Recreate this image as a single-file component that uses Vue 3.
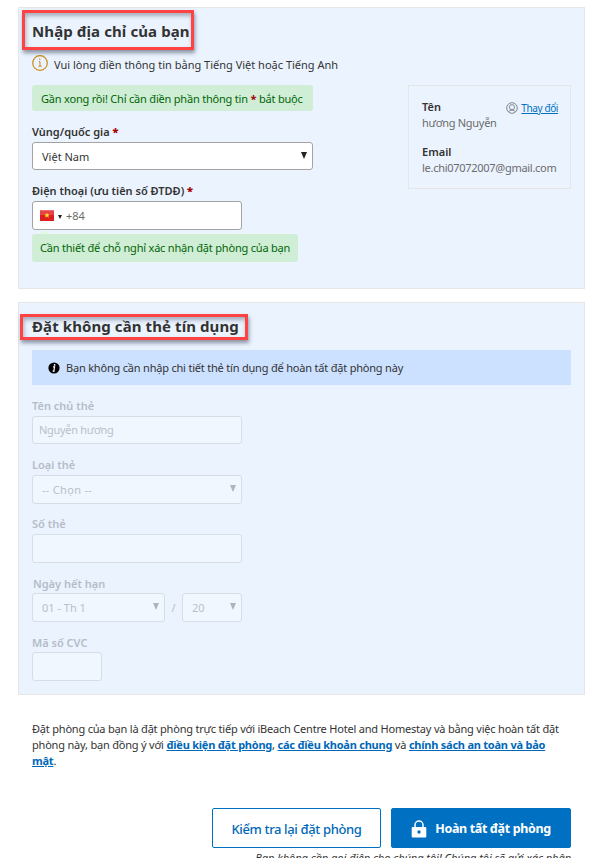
<script setup>
import { ref } from 'vue'

const country = ref('Việt Nam')
const holder = ref('Nguyễn hương')
const email = ref('le.chi07072007@gmail.com')
</script>

<template>
  <main class="page">
    <section class="panel address">
      <h2><span class="title-one">Nhập địa chỉ của bạn</span></h2>
      <div class="mark mark-one"></div>
      <div class="hint">
        <svg width="16" height="16" viewBox="0 0 16 16" fill="none" stroke="#c98b16">
          <circle cx="8" cy="8" r="7.3" stroke-width="1.2" />
          <path d="M6.7 6.7H8v4.2M6.5 11.2h3.2" />
          <circle cx="7.8" cy="4.3" r=".7" fill="#c98b16" stroke="none" />
        </svg>
        <span class="hint-text">Vui lòng điền thông tin bằng Tiếng Việt hoặc Tiếng Anh</span>
      </div>
      <div class="columns">
        <div class="fields">
          <div class="success almost"><span>Gần xong rồi! Chỉ cần điền phần thông tin <b>*</b> bắt buộc</span></div>
          <label class="country-label">Vùng/quốc gia <b>*</b></label>
          <div class="field select country"><span>{{ country }}</span><i class="arrow"></i></div>
          <label class="phone-label">Điện thoại (ưu tiên số ĐTDĐ) <b>*</b></label>
          <div class="field phone">
            <svg width="14" height="11" viewBox="0 0 14 11">
              <rect width="14" height="11" fill="#dc2020" />
              <rect width="14" height="4" fill="#ed6a6a" />
              <rect y="1" width="14" height="4" fill="#e64444" />
              <path fill="#ffe52c" d="M7 2.7l.8 1.9h2L8.2 5.8l.6 2L7 6.6l-1.8 1.2.6-2-1.6-1.2h2z" />
            </svg>
            <i class="arrow small"></i>
            <span>+84</span>
          </div>
          <div class="success needed"><span>Cần thiết để chỗ nghỉ xác nhận đặt phòng của bạn</span></div>
        </div>
        <aside class="contact">
          <div class="contact-head">
            <strong>Tên</strong>
            <a class="change">
              <svg width="12" height="12" viewBox="0 0 12 12" fill="none" stroke="#777b82" stroke-width=".9">
                <circle cx="6" cy="6" r="5.3" />
                <circle cx="6" cy="5.2" r="2.6" />
                <path d="M2.6 9.8c.8-1.4 2-1.6 3.4-1.6s2.6.2 3.4 1.6" />
              </svg>
              <u>Thay đổi</u>
            </a>
          </div>
          <p class="person">hương Nguyễn</p>
          <strong class="email-label">Email</strong>
          <p class="email">{{ email }}</p>
        </aside>
      </div>
    </section>

    <section class="panel card">
      <h2><span class="title-two">Đặt không cần thẻ tín dụng</span></h2>
      <div class="mark mark-two"></div>
      <div class="notice">
        <svg width="12" height="12" viewBox="0 0 12 12">
          <circle cx="6" cy="6" r="5.6" fill="#000" />
          <path d="M5 4.9h1.6L5.8 9M4.7 9.1h2" fill="none" stroke="#fff" stroke-width="1.2" />
          <circle cx="6.6" cy="2.9" r=".9" fill="#fff" />
        </svg>
        <span>Bạn không cần nhập chi tiết thẻ tín dụng để hoàn tất đặt phòng này</span>
      </div>
      <div class="disabled">
        <label class="l-holder">Tên chủ thẻ</label>
        <div class="field holder"><span>{{ holder }}</span></div>
        <label class="l-type">Loại thẻ</label>
        <div class="field select"><span class="choose">-- Chọn --</span><i class="arrow"></i></div>
        <label>Số thẻ</label>
        <div class="field"></div>
        <label class="l-expiry">Ngày hết hạn</label>
        <div class="expiry">
          <div class="field select month"><span>01 - Th 1</span><i class="arrow"></i></div>
          <span class="slash">/</span>
          <div class="field select year"><span>20</span><i class="arrow"></i></div>
        </div>
        <label class="l-cvc">Mã số CVC</label>
        <div class="field cvc"></div>
      </div>
    </section>

    <div class="terms">
      <div>Đặt phòng của bạn là đặt phòng trực tiếp với iBeach Centre Hotel and Homestay và bằng việc hoàn tất đặt</div>
      <div>phòng này, bạn đồng ý với <a>điều kiện đặt phòng</a>, <a>các điều khoản chung</a> và <a>chính sách an toàn và bảo</a></div>
      <div><a>mật</a>.</div>
    </div>

    <div class="actions">
      <button class="check"><span>Kiểm tra lại đặt phòng</span></button>
      <button class="finish">
        <svg width="16" height="18" viewBox="0 0 16 18">
          <path d="M4 8V5a4 4 0 0 1 8 0v3" fill="none" stroke="#fff" stroke-width="1.5" />
          <rect x=".7" y="7" width="14.6" height="10.4" rx="1" fill="#fff" />
          <circle cx="8" cy="12" r="1.7" fill="#0071c2" />
        </svg>
        <span>Hoàn tất đặt phòng</span>
      </button>
    </div>
    <p class="footnote">Bạn không cần gọi điện cho chúng tôi! Chúng tôi sẽ gửi xác nhận</p>
  </main>
</template>

<style>
body {
  margin: 0;
  background: #fff;
  overflow: hidden;
}
</style>

<style scoped>
* {
  box-sizing: border-box;
}
.page {
  width: 610px;
  height: 858px;
  padding: 7px 25px 0 18px;
  overflow: hidden;
  font: 11px/16px "Noto Sans", "Open Sans", sans-serif;
  color: #333;
  white-space: nowrap;
}
svg {
  display: block;
  flex: none;
}
.panel {
  position: relative;
  width: 567px;
  padding: 0 13px;
  border: 1px solid #e6e6e6;
  background: #ebf3ff;
}
.address {
  height: 282px;
}
.card {
  height: 393px;
  margin-top: 13px;
}
h2 {
  margin: 0;
  height: 47px;
  padding-top: 11px;
  font-size: 15px;
  line-height: 24px;
  font-weight: 700;
  letter-spacing: .09px;
}
.mark {
  position: absolute;
  border: 3px solid #ff4343;
  box-shadow: 1px 3px 4px rgba(60, 70, 90, .55), inset 1px 3px 4px rgba(60, 70, 90, .4);
}
.mark-one {
  left: 3px;
  top: 2px;
  width: 172px;
  height: 40px;
}
.mark-two {
  left: 1px;
  top: 11px;
  width: 228px;
  height: 26px;
}
.hint {
  display: flex;
  gap: 6px;
  height: 30px;
}
.hint-text {
  padding-top: 2px;
}
.columns {
  display: flex;
  justify-content: space-between;
  align-items: flex-start;
}
.success {
  display: flex;
  align-items: center;
  padding-left: 8px;
  border-radius: 3px;
  background: #d0edd5;
  color: #006607;
  letter-spacing: -.2px;
}
b {
  color: #a30000;
}
.almost {
  width: 281px;
  height: 26px;
  padding: 1px 0 0 9px;
}
.needed {
  position: relative;
  width: 266px;
  height: 28px;
  margin-top: 4px;
}
.needed::before {
  content: "";
  position: absolute;
  left: 8px;
  top: -4px;
  border: 4px solid transparent;
  border-top: 0;
  border-bottom-color: #e0fadf;
}
label {
  display: block;
  font-weight: 600;
  line-height: 16px;
}
.country-label,
.phone-label {
  padding: 13px 0 2px;
}
.field {
  display: flex;
  align-items: center;
  width: 210px;
  height: 29px;
  border: 1px solid #a3a3a3;
  border-radius: 3px;
  background: #fff;
}
.select {
  justify-content: space-between;
  padding: 0 5px 0 9px;
}
.country {
  width: 281px;
  height: 28px;
  padding-top: 1px;
}
.arrow {
  width: 0;
  height: 0;
  margin-top: -2px;
  border: 3.5px solid transparent;
  border-top: 7px solid #222;
  border-bottom: 0;
}
.arrow.small {
  margin: 2px 4px 0 4px;
  border-width: 4px 2.5px 0;
}
.phone {
  padding-left: 7px;
  color: #6b6b6b;
}
.contact {
  width: 163px;
  height: 104px;
  padding: 13px 12px 0 13px;
  border: 1px solid #e6e6e6;
}
.contact-head {
  display: flex;
  justify-content: space-between;
  height: 16px;
}
.change {
  display: flex;
  align-items: center;
  gap: 3px;
  padding-top: 1px;
  font-size: 10px;
  letter-spacing: -.4px;
  color: #0071c2;
}
.contact p {
  margin: 0;
  color: #6b6b6b;
  letter-spacing: -.28px;
}
.email-label {
  display: block;
  margin-top: 13px;
}
strong {
  font-weight: 600;
}
.notice {
  display: flex;
  align-items: center;
  gap: 6px;
  height: 35px;
  padding-left: 16px;
  background: #cce1ff;
  letter-spacing: -.2px;
}
.disabled label {
  height: 30px;
  padding-top: 12px;
  color: #b5bcc8;
}
.disabled .l-holder,
.disabled .l-type {
  height: 31px;
  padding-top: 13px;
}
.disabled .l-expiry {
  padding: 13px 0 0 1px;
}
.disabled .l-cvc {
  padding-top: 13px;
}
.disabled .field {
  border-color: #d7dce5;
  background: #f0f7ff;
  color: #b9bfc9;
}
.disabled .holder {
  height: 28px;
  padding-left: 6px;
  letter-spacing: -.3px;
}
.choose {
  letter-spacing: .3px;
}
.disabled .arrow {
  border-top-color: #aeb4bd;
}
.expiry {
  display: flex;
  align-items: center;
}
.disabled .month {
  width: 133px;
}
.disabled .year {
  width: 60px;
}
.slash {
  width: 17px;
  text-align: center;
  color: #b9bfc9;
}
.disabled .cvc {
  width: 70px;
}
.terms {
  margin: 26px 0 0 14px;
  letter-spacing: -.2px;
}
.terms a {
  color: #0068b8;
  font-weight: 700;
  text-decoration: underline;
  letter-spacing: -.23px;
}
.actions {
  display: flex;
  justify-content: flex-end;
  gap: 10px;
  margin: 39px 14px 0 0;
}
button {
  display: flex;
  align-items: center;
  justify-content: center;
  height: 40px;
  padding: 2px 0 0;
  border: 1px solid #0071c2;
  border-radius: 2px;
  font: 500 13px/20px "Noto Sans", "Open Sans", sans-serif;
  letter-spacing: -.36px;
}
.check {
  width: 169px;
  background: #fff;
  color: #0068b8;
}
.finish {
  gap: 8px;
  width: 180px;
  background: #0071c2;
  color: #fff;
  font-size: 12.5px;
  font-weight: 700;
}
.footnote {
  margin: 2px 14px 0 0;
  text-align: right;
  font-style: italic;
  letter-spacing: -.03px;
}
</style>
